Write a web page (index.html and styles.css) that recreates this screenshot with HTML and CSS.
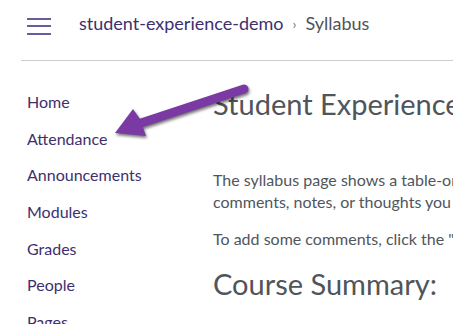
FILE: index.html
```html
<!DOCTYPE html>
<html lang="en">
  <head>
    <meta charset="UTF-8" />
    <meta name="viewport" content="width=device-width, initial-scale=1.0" />
    <title>Syllabus</title>
    <link rel="stylesheet" href="styles.css">
  </head>

  <body>
    <div class="header">
      <button class="menu-btn" aria-label="Menu">
        <span></span>
        <span></span>
        <span></span>
      </button>
      <nav class="crumbs">
        <a href="#">student-experience-demo</a>
        <span class="sep">&rsaquo;</span>
        <span class="current">Syllabus</span>
      </nav>
    </div>

    <div class="layout">
      <ul class="course-nav">
        <li><a href="#">Home</a></li>
        <li><a href="#">Attendance</a></li>
        <li><a href="#">Announcements</a></li>
        <li><a href="#">Modules</a></li>
        <li><a href="#">Grades</a></li>
        <li><a href="#">People</a></li>
        <li><a href="#">Pages</a></li>
      </ul>

      <div class="content">
        <h1>Student Experience Demo</h1>
        <p>
          The syllabus page shows a table-oriented view of the course schedule, and the basics of course grading. You can add any other<br>
          comments, notes, or thoughts you have about the course structure, course policies or anything else.
        </p>
        <p>To add some comments, click the "Edit" link at the top.</p>
        <h2>Course Summary:</h2>
      </div>
    </div>

    <svg class="arrow" width="453" height="324" viewBox="0 0 453 324">
      <line x1="244" y1="89" x2="138" y2="124" />
      <polygon points="115,133 133,109 140,119 146,136" />
    </svg>
  </body>
</html>
```

FILE: styles.css
```css
body {
  margin: 0;
  font-family: Lato, "Open Sans", sans-serif;
  color: #50565c;
  background: #fff;
  overflow: hidden;
  position: relative;
  height: 324px;
}

a {
  color: #3e2f6e;
  text-decoration: none;
}

.header {
  display: flex;
  align-items: center;
  height: 60px;
  margin-left: 21px;
  padding-left: 6px;
  border-bottom: 1px solid #c7cdd1;
}

.menu-btn {
  display: flex;
  flex-direction: column;
  gap: 5.5px;
  width: 24px;
  padding: 0;
  margin-top: -8px;
  background: none;
  border: none;
}

.menu-btn span {
  display: block;
  height: 2px;
  background-color: #6b5b9e;
}

.crumbs {
  display: flex;
  align-items: center;
  margin-left: 28px;
  margin-top: -14px;
  font-size: 18px;
}

.crumbs .sep {
  margin: 0 9px;
  font-size: 14px;
  color: #73777b;
}

.crumbs .current {
  color: #4f5358;
}

.layout {
  display: flex;
  margin-left: 21px;
  height: 263px;
  overflow: hidden;
}

.course-nav {
  width: 186px;
  flex: none;
  margin: 23px 0 0;
  padding: 0 0 0 6px;
  list-style: none;
  font-size: 16px;
}

.course-nav li {
  height: 36.7px;
  line-height: 36.7px;
}

.content {
  flex: none;
  width: 900px;
}

.content h1 {
  margin: 26px 0 0;
  font-size: 29px;
  font-weight: 400;
  line-height: 1.2;
  color: #4f555b;
}

.content p {
  margin: 47px 0 0;
  font-size: 16px;
  line-height: 22.5px;
}

.content p + p {
  margin-top: 14px;
}

.content h2 {
  margin: 17px 0 0;
  font-size: 29px;
  font-weight: 400;
  line-height: 1.2;
  color: #4f555b;
}

.arrow {
  position: absolute;
  left: 0;
  top: 0;
  pointer-events: none;
  filter: drop-shadow(1px 2px 1.5px rgba(0, 0, 0, 0.55));
}

.arrow line {
  stroke: #7b39a3;
  stroke-width: 9;
  stroke-linecap: round;
}

.arrow polygon {
  fill: #7b39a3;
}
```
